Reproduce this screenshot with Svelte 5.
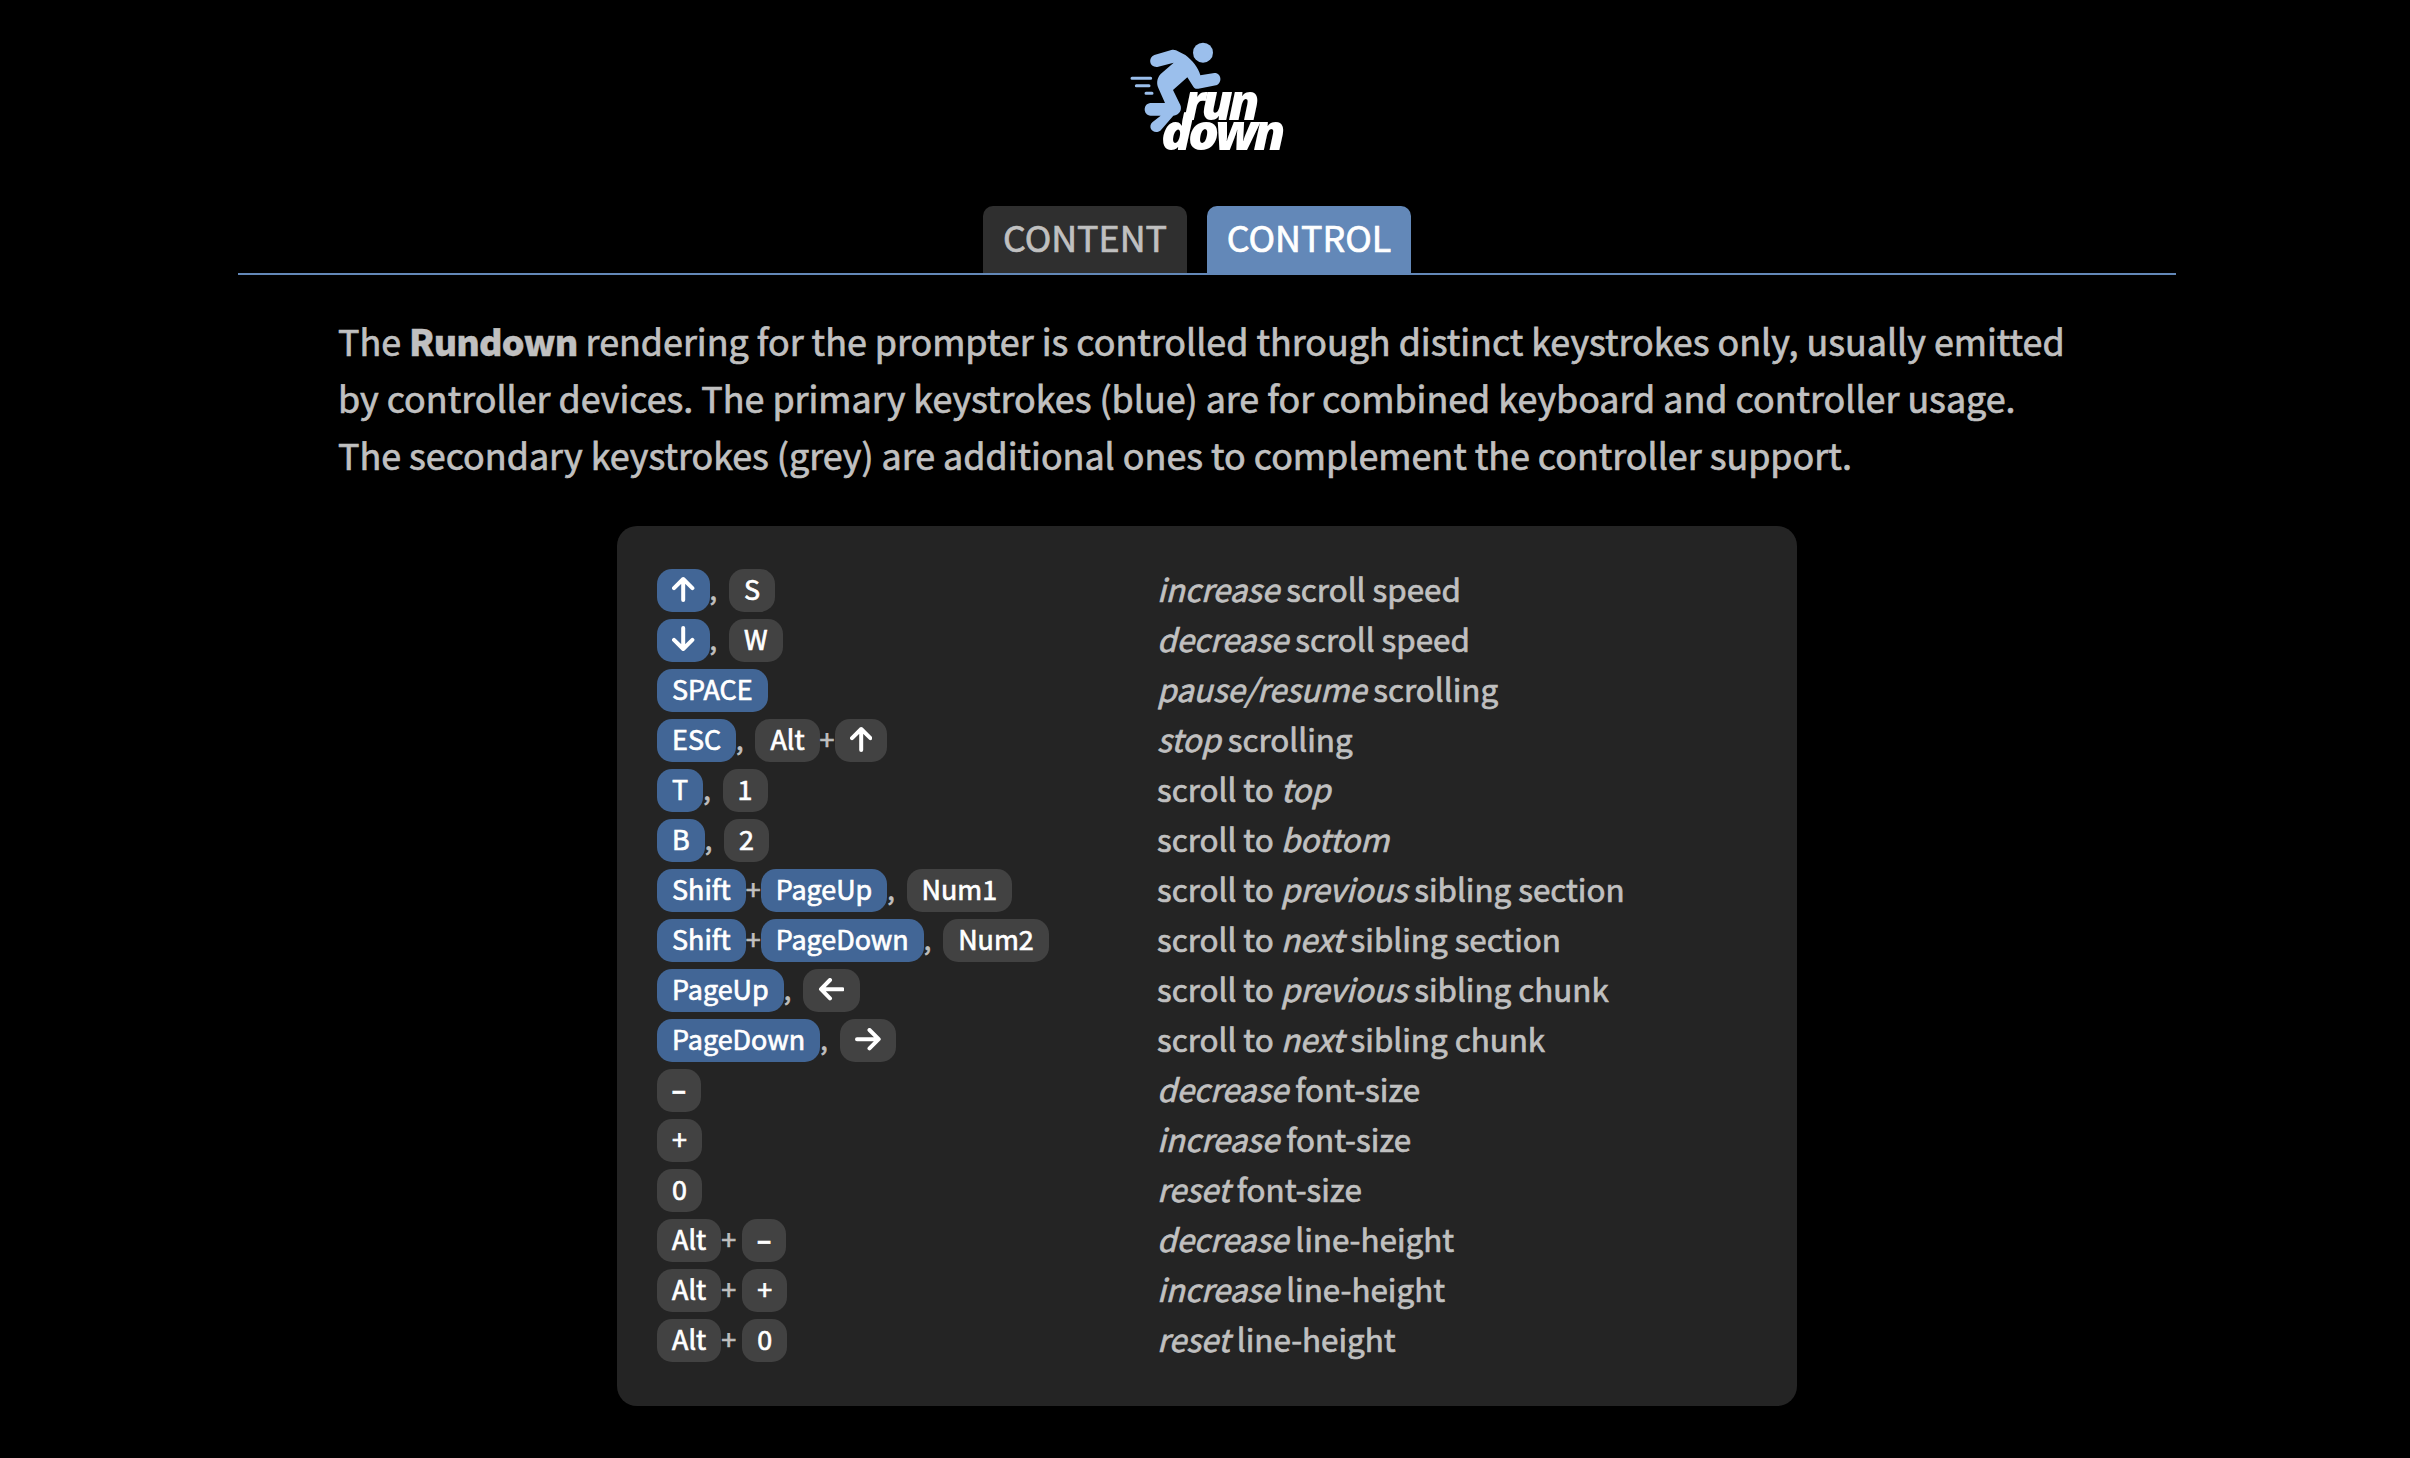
<script>
  // Keys: p = primary (blue), s = secondary (grey); plain strings are separators.
  const p = (label) => ({ label, kind: 'primary' });
  const s = (label) => ({ label, kind: 'secondary' });
  const arrows = {
    up: 'M11.2 24V3M2 12.2L11.2 3L20.4 12.2',
    down: 'M11.2 2V23M2 13.8L11.2 23L20.4 13.8',
    left: 'M24.5 11.2H3.5M12 2L3 11.2L12 20.4',
    right: 'M2 11.2H23M14.5 2L23.7 11.2L14.5 20.4'
  };
  const rows = [
    { keys: [p('up'), ',', s('S')], text: [['increase', 1], [' scroll speed']] },
    { keys: [p('down'), ',', s('W')], text: [['decrease', 1], [' scroll speed']] },
    { keys: [p('SPACE')], text: [['pause/resume', 1], [' scrolling']] },
    { keys: [p('ESC'), ',', s('Alt'), '+', s('up')], text: [['stop', 1], [' scrolling']] },
    { keys: [p('T'), ',', s('1')], text: [['scroll to '], ['top', 1]] },
    { keys: [p('B'), ',', s('2')], text: [['scroll to '], ['bottom', 1]] },
    { keys: [p('Shift'), '+', p('PageUp'), ',', s('Num1')], text: [['scroll to '], ['previous', 1], [' sibling section']] },
    { keys: [p('Shift'), '+', p('PageDown'), ',', s('Num2')], text: [['scroll to '], ['next', 1], [' sibling section']] },
    { keys: [p('PageUp'), ',', s('left')], text: [['scroll to '], ['previous', 1], [' sibling chunk']] },
    { keys: [p('PageDown'), ',', s('right')], text: [['scroll to '], ['next', 1], [' sibling chunk']] },
    { keys: [s('–')], text: [['decrease', 1], [' font-size']] },
    { keys: [s('+')], text: [['increase', 1], [' font-size']] },
    { keys: [s('0')], text: [['reset', 1], [' font-size']] },
    { keys: [s('Alt'), '+ ', s('–')], text: [['decrease', 1], [' line-height']] },
    { keys: [s('Alt'), '+ ', s('+')], text: [['increase', 1], [' line-height']] },
    { keys: [s('Alt'), '+ ', s('0')], text: [['reset', 1], [' line-height']] }
  ];
</script>

<div class="page">
  <header>
    <svg class="logo" viewBox="0 0 570 405" role="img" aria-label="rundown">
      <g fill="#9bbfec">
        <circle cx="279" cy="68" r="30" />
        <path d="M184 60L133 75C113 83 118 113 142 111L191 98L152 132C139 146 140 163 145 174L165 219H122C98 220 98 256 122 257H152L127 277C111 293 131 315 151 302L190 257C208 255 217 240 211 225L189 180L232 142L250 170C254 176 259 177 265 176L318 166C338 160 335 128 313 129L271 136C265 112 246 90 226 75L198 61C193 59 189 59 184 60Z" />
      </g>
      <path d="M66 145H122M79 167H117M108 190H126" stroke="#9bbfec" stroke-width="9" stroke-linecap="round" />
      <text x="221" y="269" textLength="216" lengthAdjust="spacingAndGlyphs">run</text>
      <text x="153" y="361" textLength="361" lengthAdjust="spacingAndGlyphs">down</text>
    </svg>
  </header>

  <main>
    <nav>
      <div class="tab">CONTENT</div>
      <div class="tab active">CONTROL</div>
    </nav>

    <p>
      The <b>Rundown</b> rendering for the prompter is controlled through distinct keystrokes only, usually emitted<br />
      by controller devices. The primary keystrokes (blue) are for combined keyboard and controller usage.<br />
      The secondary keystrokes (grey) are additional ones to complement the controller support.
    </p>

    <section>
      {#each rows as row}
        <div class="row">
          <div class="keys">
            {#each row.keys as key}
              {#if typeof key === 'string'}
                <span class="sep" class:comma={key === ','}>{key}</span>
              {:else}
                <kbd class={key.kind} class:dash={key.label === '–'}>
                  {#if arrows[key.label]}
                    <svg class="arrow" class:wide={key.label === 'left' || key.label === 'right'} viewBox={key.label === 'left' || key.label === 'right' ? '0 0 26.5 22.5' : '0 0 22.5 26.5'}>
                      <path d={arrows[key.label]} />
                    </svg>
                  {:else}{key.label}{/if}
                </kbd>
              {/if}
            {/each}
          </div>
          <div class="desc">{#each row.text as [t, em]}{#if em}<i>{t}</i>{:else}<span>{t}</span>{/if}{/each}</div>
        </div>
      {/each}
    </section>
  </main>
</div>

<style>
  :global(body) {
    background: #000;
  }
  .page {
    box-sizing: border-box;
    min-height: 1458px;
    padding-top: 30px;
    color: #c0c0c0;
    font-family: 'Noto Sans CJK SC', 'Noto Sans', sans-serif;
    font-size: 35.84px;
    -webkit-text-stroke: 0.7px currentColor;
  }
  header {
    display: flex;
    justify-content: center;
    margin-bottom: 41px;
  }
  .logo {
    width: 190px;
    height: 135px;
  }
  .logo text {
    fill: #fff;
    font: italic 800 150px 'Open Sans', sans-serif;
    letter-spacing: -12px;
    -webkit-text-stroke: 4px #fff;
  }
  main {
    width: 1938px;
    margin-left: 238px;
  }
  nav {
    display: flex;
    justify-content: center;
    gap: 20px;
    padding-right: 20px;
    border-bottom: 2px solid #6388b8;
  }
  .tab {
    box-sizing: border-box;
    width: 204px;
    height: 67px;
    text-align: center;
    line-height: 61px;
    border-radius: 10px 10px 0 0;
    background: #2f2f2f;
  }
  .tab.active {
    background: #6388b8;
    color: #fff;
  }
  p {
    margin: 37px 0 43px;
    padding-left: 100px;
    line-height: 57px;
    white-space: nowrap;
  }
  b {
    font-weight: 900;
    letter-spacing: -0.8px;
    -webkit-text-stroke-width: 0.4px;
  }
  section {
    box-sizing: border-box;
    width: 1180px;
    margin: 0 auto;
    padding: 40px;
    border-radius: 20px;
    background: #242424;
  }
  .row {
    display: grid;
    grid-template-columns: 500px 1fr;
    height: 50px;
  }
  .keys {
    display: flex;
    align-items: flex-start;
    font-size: 26.88px;
  }
  kbd {
    box-sizing: border-box;
    height: 43px;
    margin-top: 3px;
    padding: 0 15.06px;
    border-radius: 15px;
    color: #fff;
    font-family: inherit;
    line-height: 39px;
  }
  .primary {
    background: #426696;
  }
  .secondary {
    background: #424242;
  }
  .dash {
    padding: 0 14.6px;
    font-weight: 700;
  }
  .arrow {
    display: block;
    width: 22.5px;
    height: 26.5px;
    margin-top: 7px;
    fill: none;
    stroke: #fff;
    stroke-width: 4;
    stroke-linecap: round;
    stroke-linejoin: round;
  }
  .arrow.wide {
    width: 26.5px;
    height: 22.5px;
    margin-top: 9px;
  }
  .sep {
    line-height: 45px;
    white-space: pre;
  }
  .comma {
    width: 19.3px;
  }
  .desc {
    font-size: 31.36px;
    line-height: 45px;
    white-space: pre;
  }
</style>
